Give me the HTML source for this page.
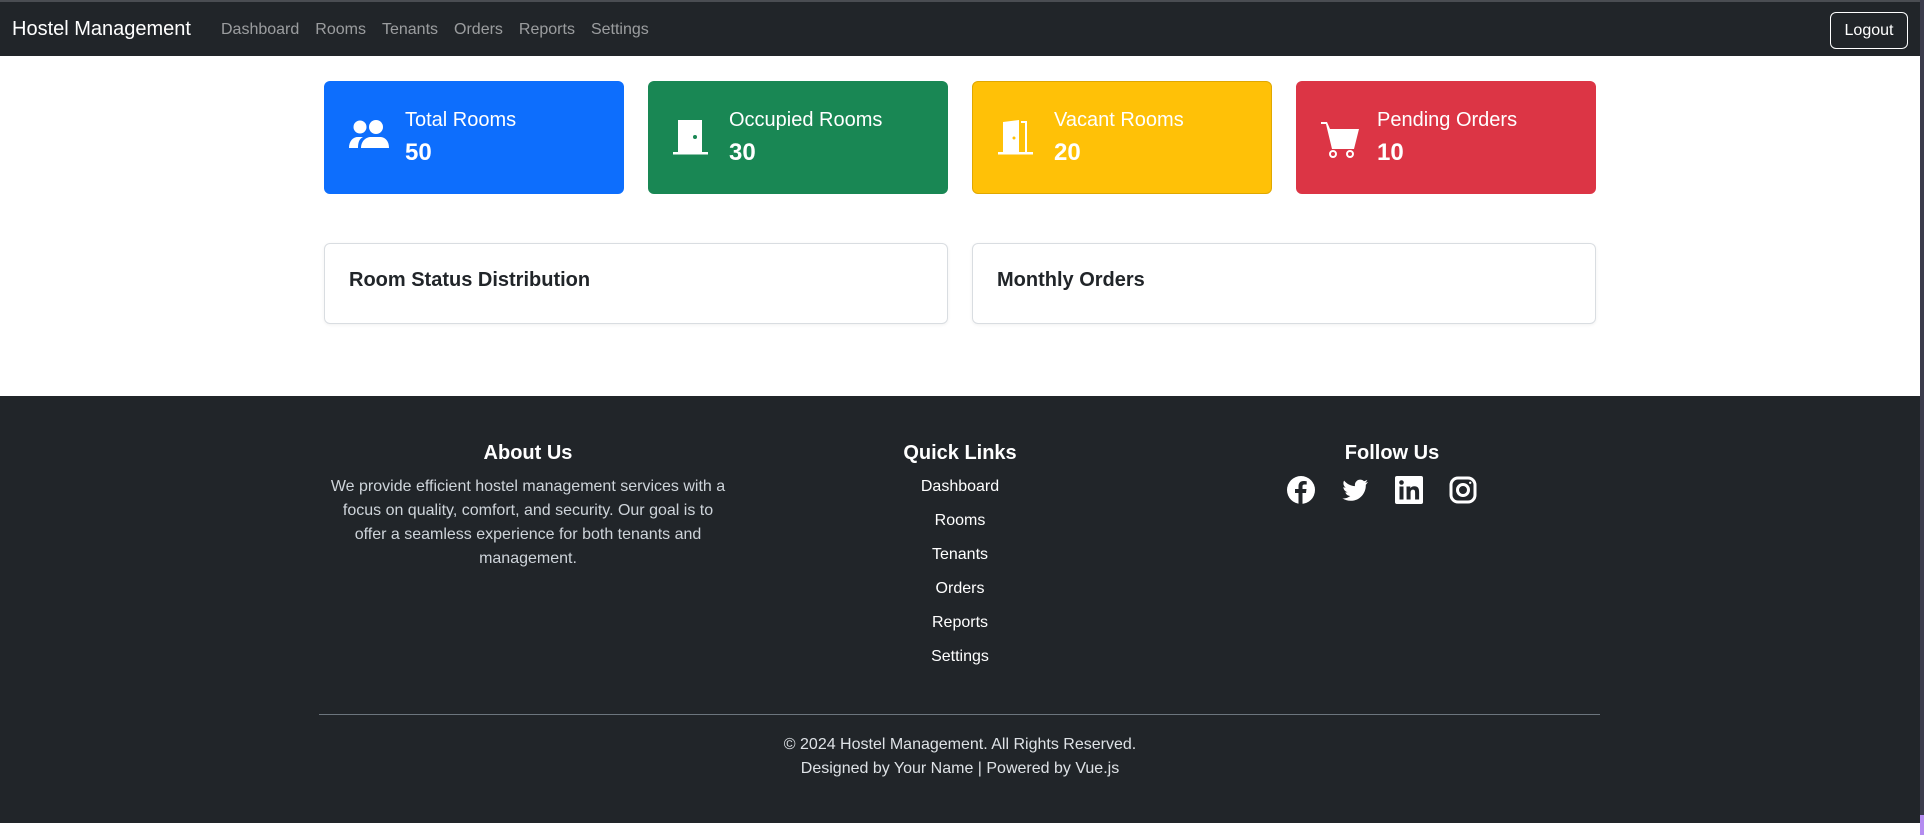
<!DOCTYPE html>
<html><head><meta charset="utf-8"><style>
*{box-sizing:border-box;margin:0;padding:0}
html,body{width:1924px;height:835px;overflow:hidden;background:#fff;font-family:"Liberation Sans","DejaVu Sans",sans-serif;}
#sb{position:absolute;left:1920px;top:0;width:4px;height:835px;background:#3b3c4c}
#sb2{position:absolute;left:1920px;top:815px;width:4px;height:20px;background:#b48cf0}
nav{position:absolute;left:0;top:0;width:1920px;height:56px;background:#212529;border-top:2px solid #4a4d52}
.brand{position:absolute;left:12px;top:16px;font-size:20px;color:#fff}
.links{position:absolute;left:213px;top:19px;font-size:16px;color:rgba(255,255,255,.55);display:flex}
.links span{padding:0 8px}
.logout{position:absolute;left:1830px;top:10px;width:78px;height:37px;border:1px solid #fff;border-radius:6px;color:#fff;font-size:16px;text-align:center;line-height:35px}
.card{position:absolute;top:81px;width:300px;height:113px;border-radius:6px;display:flex;align-items:center;padding-left:25px;color:#fff}
.card svg{width:40px;height:40px;margin-right:16px;flex:none}
.t{font-size:20px;line-height:24px;margin-bottom:6px}
.n{font-size:24px;font-weight:bold;line-height:29px}
.cc{position:absolute;top:243px;width:624px;height:81px;border:1px solid #d9dde1;border-radius:6px;box-shadow:0 1px 3px rgba(0,0,0,.06);padding:20px 24px;font-size:20px;font-weight:bold;color:#212529;line-height:32px}
footer{position:absolute;left:0;top:396px;width:1920px;height:427px;background:#212529;color:#fff}
.col{position:absolute;top:45px;width:432px;text-align:center}
h5{font-size:20px;font-weight:bold;line-height:24px;margin-bottom:10px}
.about{color:#ced4da;font-size:16px;line-height:24px;white-space:nowrap}
.ql div{font-size:16px;line-height:24px;margin-bottom:10px}
.soc{display:flex;justify-content:center;gap:26px;margin-top:11px;margin-left:-20px}
.soc svg{width:28px;height:28px}
hr{position:absolute;left:319px;top:318px;width:1281px;border:0;border-top:1px solid #6c757d}
.copy{position:absolute;left:0;top:337px;width:1920px;text-align:center;color:#dee2e6;font-size:16px;line-height:24px}
</style></head><body>
<nav><div class="brand">Hostel Management</div>
<div class="links"><span>Dashboard</span><span>Rooms</span><span>Tenants</span><span>Orders</span><span>Reports</span><span>Settings</span></div>
<div class="logout">Logout</div></nav>

<div class="card" style="left:324px;background:#0d6efd"><svg viewBox="0 0 40 40" fill="#fff"><circle cx="11" cy="9" r="6.5"/><circle cx="27" cy="9" r="7"/><path d="M0 30c0-7 4-11 9-11h5c-4 2-5 6-5 11z"/><path d="M12 30c0-7 5-11 10-11h9c5 0 9 4 9 11z"/></svg><div><div class="t">Total Rooms</div><div class="n">50</div></div></div>
<div class="card" style="left:648px;background:#198754"><svg viewBox="0 0 40 40" fill="#fff"><path d="M5 2h24v32H5z" /><rect x="0" y="34" width="35" height="2.5"/><circle cx="22" cy="19" r="2" fill="#198754"/></svg><div><div class="t">Occupied Rooms</div><div class="n">30</div></div></div>
<div class="card" style="left:972px;background:#ffc107;border:1px solid #e0a800"><svg viewBox="0 0 40 40" fill="#fff"><path d="M5 4l16-2v34H5z"/><path d="M23 3h6v31h-2V5h-4z"/><rect x="0" y="34" width="35" height="2.5"/><circle cx="16" cy="20" r="1.5" fill="#ffc107"/></svg><div><div class="t">Vacant Rooms</div><div class="n">20</div></div></div>
<div class="card" style="left:1296px;background:#dc3545"><svg viewBox="0 0 40 40" fill="#fff"><path d="M0 4h6l3 7h29l-5 20H11L5 6H0z"/><circle cx="12" cy="36" r="3" fill="none" stroke="#fff" stroke-width="2"/><circle cx="29" cy="36" r="3" fill="none" stroke="#fff" stroke-width="2"/></svg><div><div class="t">Pending Orders</div><div class="n">10</div></div></div>

<div class="cc" style="left:324px">Room Status Distribution</div>
<div class="cc" style="left:972px">Monthly Orders</div>

<footer>
<div class="col" style="left:312px"><h5>About Us</h5><div class="about">We provide efficient hostel management services with a<br>focus on quality, comfort, and security. Our goal is to<br>offer a seamless experience for both tenants and<br>management.</div></div>
<div class="col ql" style="left:744px"><h5>Quick Links</h5><div>Dashboard</div><div>Rooms</div><div>Tenants</div><div>Orders</div><div>Reports</div><div>Settings</div></div>
<div class="col" style="left:1176px"><h5>Follow Us</h5><div class="soc">
<svg viewBox="0 0 28 28"><circle cx="14" cy="14" r="14" fill="#fff"/><path d="M15.5 28V17h3.5l.5-4h-4v-2.5c0-1.2.4-2 2-2h2.2V5.2c-.4 0-1.7-.2-3.2-.2-3.1 0-5 1.9-5 5.3V13H8v4h3.5v11z" fill="#212529"/></svg>
<svg viewBox="0 0 28 28"><path fill="#fff" d="M27 6c-1 .4-2 .7-3 .8 1.1-.7 1.9-1.7 2.3-2.9-1 .6-2.2 1-3.3 1.3C22 4.2 20.6 3.6 19.2 3.6c-2.9 0-5.3 2.4-5.3 5.3 0 .4 0 .8.1 1.2C9.6 9.9 5.7 7.8 3.1 4.6c-.5.8-.7 1.7-.7 2.7 0 1.8.9 3.5 2.4 4.4-.9 0-1.7-.3-2.4-.7 0 2.6 1.8 4.7 4.3 5.2-.8.2-1.6.3-2.4.1.7 2.1 2.6 3.7 5 3.7-2.3 1.8-5.3 2.7-7.9 2.4 2.4 1.5 5.2 2.4 8.2 2.4 9.8 0 15.2-8.1 15.2-15.2v-.7C25.4 8 26.3 7.1 27 6z"/></svg>
<svg viewBox="0 0 28 28"><rect width="28" height="28" rx="2" fill="#fff"/><rect x="4.5" y="10.5" width="4" height="13" fill="#212529"/><circle cx="6.5" cy="6.5" r="2.3" fill="#212529"/><path d="M11.5 10.5h3.8v1.8c.6-1.1 2-2.1 4.1-2.1 4 0 4.7 2.6 4.7 6v7.3h-4v-6.5c0-1.5 0-3.4-2.1-3.4s-2.4 1.6-2.4 3.3v6.6h-4z" fill="#212529"/></svg>
<svg viewBox="0 0 28 28" fill="none" stroke="#fff"><rect x="2" y="2" width="24" height="24" rx="7" stroke-width="3"/><circle cx="14" cy="14" r="5.5" stroke-width="3"/><circle cx="21.2" cy="6.8" r="1.2" fill="#fff" stroke="none"/></svg>
</div></div>
<hr>
<div class="copy">© 2024 Hostel Management. All Rights Reserved.<br>Designed by Your Name | Powered by Vue.js</div>
</footer>
<div id="sb"></div><div id="sb2"></div>
</body></html>
